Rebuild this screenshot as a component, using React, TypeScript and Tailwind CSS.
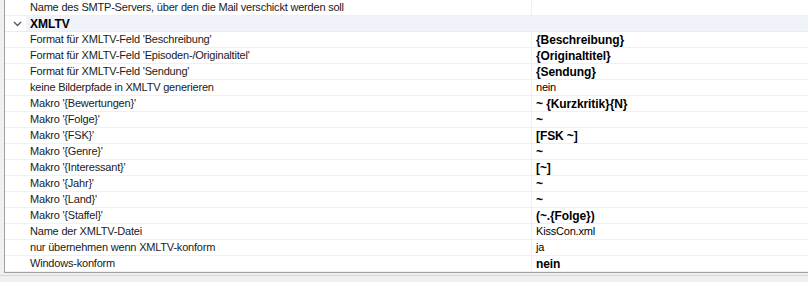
type Row = { label: string; value: string; bold?: boolean };

const rows: Row[] = [
  { label: "Format für XMLTV-Feld 'Beschreibung'", value: "{Beschreibung}", bold: true },
  { label: "Format für XMLTV-Feld 'Episoden-/Originaltitel'", value: "{Originaltitel}", bold: true },
  { label: "Format für XMLTV-Feld 'Sendung'", value: "{Sendung}", bold: true },
  { label: "keine Bilderpfade in XMLTV generieren", value: "nein" },
  { label: "Makro '{Bewertungen}'", value: "~ {Kurzkritik}{N}", bold: true },
  { label: "Makro '{Folge}'", value: "~", bold: true },
  { label: "Makro '{FSK}'", value: "[FSK ~]", bold: true },
  { label: "Makro '{Genre}'", value: "~", bold: true },
  { label: "Makro '{Interessant}'", value: "[~]", bold: true },
  { label: "Makro '{Jahr}'", value: "~", bold: true },
  { label: "Makro '{Land}'", value: "~", bold: true },
  { label: "Makro '{Staffel}'", value: "(~.{Folge})", bold: true },
  { label: "Name der XMLTV-Datei", value: "KissCon.xml" },
  { label: "nur übernehmen wenn XMLTV-konform", value: "ja" },
  { label: "Windows-konform", value: "nein", bold: true },
];

function PropRow({ label, value, bold }: Row) {
  return (
    <div className="flex h-4 border-b border-[#f0f0f0] bg-white">
      <div className="w-[21px] shrink-0 bg-white" />
      <div className="flex w-[506px] shrink-0 items-center truncate border-r border-[#f0f0f0] pl-[4px] tracking-[-0.2px] text-[#1a1a1a]">
        {label}
      </div>
      <div
        className={`flex flex-1 items-center pl-[4px] text-black ${
          bold ? "text-[12px] font-bold tracking-[-0.1px]" : "tracking-[-0.2px]"
        }`}
      >
        {value}
      </div>
    </div>
  );
}

export default function App() {
  return (
    <div
      className="h-[282px] w-[808px] overflow-hidden bg-[#f0f0f0] text-[11px] leading-none"
      style={{ fontFamily: "'Liberation Sans', Arial, sans-serif" }}
    >
      <div className="ml-[4px] h-[273px] border-b border-l border-[#a0a0a0] bg-white">
        {/* top row, partly scrolled */}
        <div className="flex h-4 border-b border-[#f0f0f0]">
          <div className="w-[21px] shrink-0" />
          <div className="flex w-[506px] shrink-0 items-center border-r border-[#f0f0f0] pl-[4px] tracking-[-0.2px] text-[#1a1a1a]">
            Name des SMTP-Servers, über den die Mail verschickt werden soll
          </div>
          <div className="flex-1" />
        </div>

        {/* category header */}
        <div className="flex h-4 items-center border-b border-[#e8ecf4] bg-[#f0f3f9]">
          <div className="flex h-full w-[21px] shrink-0 items-center justify-center bg-white">
            <svg width="9" height="6" viewBox="0 0 9 6" className="ml-[3px]">
              <path d="M1 1l3.5 3.5L8 1" fill="none" stroke="#555" strokeWidth="1.3" />
            </svg>
          </div>
          <div className="pl-[4px] text-[12px] font-bold text-black">XMLTV</div>
        </div>

        {rows.map((r) => (
          <PropRow key={r.label} {...r} />
        ))}
      </div>
      <div className="mt-[2px] h-[7px] border-t border-[#d8d8d8] bg-[#f0f0f0]" />
    </div>
  );
}
